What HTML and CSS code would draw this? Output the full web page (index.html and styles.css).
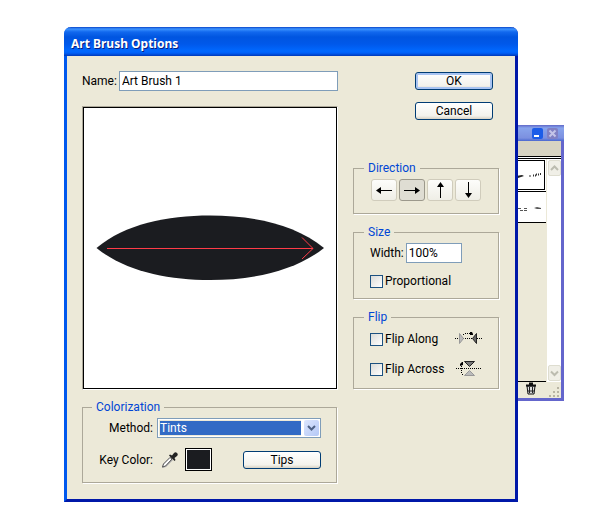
FILE: index.html
```html
<!DOCTYPE html>
<html lang="en">
<head>
<meta charset="utf-8">
<title>Art Brush Options</title>
<link rel="stylesheet" href="styles.css">
</head>
<body>
<main class="desktop">
  <section class="palette" aria-label="Brushes">
    <header class="palette-title">
      <button class="cap cap-min" type="button" aria-label="Minimize"><svg width="11" height="11" viewBox="0 0 11 11"><path d="M2 8h5" stroke="#fff" stroke-width="2"/></svg></button>
      <button class="cap cap-close" type="button" aria-label="Close"><svg width="11" height="11" viewBox="0 0 11 11"><path d="M2.500 2.500l6 6M8.500 2.500l-6 6" stroke="#c4c4e8" stroke-width="2"/></svg></button>
    </header>
    <div class="palette-tabs"></div>
    <div class="palette-body">
      <div class="brushes">
        <div class="brush brush-on"><svg width="28" height="20" viewBox="0 0 28 20"><path d="M0 11l6-1 2 1-6 2H0z" fill="#222"/><path d="M13 11h2" stroke="#333"/><path d="M17 10.500h3M20 9.500h3M24 9h2" stroke="#333" stroke-width="2" stroke-dasharray="1 1"/></svg></div>
        <div class="brush"><svg width="28" height="20" viewBox="0 0 28 20"><path d="M0 10.500h4M2 12.500h7M6 10.500h3" stroke="#555" stroke-dasharray="3 1"/><path d="M16 10l3-1 4 1v1h-4z" fill="#555"/></svg></div>
      </div>
      <div class="scroll">
        <button class="scroll-btn" type="button" aria-label="Scroll up"><svg width="11" height="14" viewBox="0 0 11 14"><path d="M2 9l3.500-3.500L9 9" fill="none" stroke="#bcbcb0" stroke-width="2"/></svg></button>
        <button class="scroll-btn" type="button" aria-label="Scroll down"><svg width="11" height="14" viewBox="0 0 11 14"><path d="M2 5.500L5.500 9 9 5.500" fill="none" stroke="#bcbcb0" stroke-width="2"/></svg></button>
      </div>
    </div>
    <footer class="palette-foot">
      <button class="trash" type="button" aria-label="Delete brush"><svg width="12" height="13" viewBox="0 0 12 13"><path d="M2 4h8l-1 8H3z" fill="#ddd" stroke="#111"/><path d="M4.500 5v6M7.500 5v6M2.500 9h7" stroke="#222"/><path d="M1 3.500h10M4 1.500h4" stroke="#111" stroke-width="2"/></svg></button>
      <svg class="grip" width="11" height="11" viewBox="0 0 11 11" fill="#b8b4a2"><path d="M8 0h2v2H8zM4 4h2v2H4zM8 4h2v2H8zM0 8h2v2H0zM4 8h2v2H4zM8 8h2v2H8z"/></svg>
    </footer>
  </section>

  <form class="dialog" aria-labelledby="dialog-title">
    <h1 class="title" id="dialog-title">Art Brush Options</h1>
    <div class="content">
      <div class="left">
        <div class="row name-row">
          <label for="name">Name:</label>
          <input class="text" id="name" type="text" value="Art Brush 1">
        </div>
        <div class="preview">
          <svg viewBox="0 0 252 280" role="img" aria-label="Brush preview">
            <path d="M12.500 140C41 116 83 107.500 126 107.500S211 116 240 140C211 163 169 172 126 172S41 163 12.500 140z" fill="#1b1c20"/>
            <path d="M23 140.500h206" stroke="#ff3c48"/>
            <path d="M218 129.500l11 11-11 10.500" fill="none" stroke="#ff3c48"/>
          </svg>
        </div>
        <fieldset class="group color">
          <legend>Colorization</legend>
          <div class="row">
            <label class="color-label" for="method">Method:</label>
            <span class="combo">
              <select id="method"><option>Tints</option></select>
              <span class="combo-arrow"><svg width="15" height="16" viewBox="0 0 15 16"><path d="M4 6l3.500 3.500L11 6" fill="none" stroke="#4d6185" stroke-width="2"/></svg></span>
            </span>
          </div>
          <div class="row key-row">
            <span class="color-label">Key Color:</span>
            <button class="dropper" type="button" aria-label="Pick key color"><svg width="17" height="18" viewBox="0 0 17 18"><path d="M1 17l1-4 7-7 3 3-7 7z" fill="#aaa"/><path d="M1.500 16l1-3L9 6.500 11 8l-6.500 7z" fill="#fff" stroke="#555"/><path d="M8 4.500l1-1 2 1L13 2c1-1 2-1 3 0s1 2 0 3l-2.500 2 1 2-1 1z" fill="#222"/></svg></button>
            <button class="swatch" type="button" aria-label="Key color"></button>
            <button class="push" type="button">Tips</button>
          </div>
        </fieldset>
      </div>

      <div class="right">
        <div class="actions">
          <button class="push push-default" type="button">OK</button>
          <button class="push" type="button">Cancel</button>
        </div>
        <fieldset class="group">
          <legend>Direction</legend>
          <div class="dirs">
            <button class="dir" type="button" aria-label="Left"><svg width="24" height="20" viewBox="0 0 24 20"><path d="M5 10.500h15" stroke="#000"/><path d="M4 10.500l5-3.500v7z"/></svg></button>
            <button class="dir" type="button" aria-label="Right" aria-pressed="true"><svg width="24" height="20" viewBox="0 0 24 20"><path d="M4 10.500h15" stroke="#000"/><path d="M20 10.500L15 7v7z"/></svg></button>
            <button class="dir" type="button" aria-label="Up"><svg width="24" height="20" viewBox="0 0 24 20"><path d="M12.500 3v15" stroke="#000"/><path d="M12.500 2L9 7h7z"/></svg></button>
            <button class="dir" type="button" aria-label="Down"><svg width="24" height="20" viewBox="0 0 24 20"><path d="M12.500 2v15" stroke="#000"/><path d="M12.500 18L9 13h7z"/></svg></button>
          </div>
        </fieldset>
        <fieldset class="group">
          <legend>Size</legend>
          <div class="row size-row">
            <label for="width">Width:</label>
            <input class="text width" id="width" type="text" value="100%">
          </div>
          <label class="check"><input type="checkbox">Proportional</label>
        </fieldset>
        <fieldset class="group flip">
          <legend>Flip</legend>
          <div class="row flip-row">
            <label class="check"><input type="checkbox">Flip Along</label>
            <svg width="28" height="16" viewBox="0 0 28 16"><path d="M1 7.500h27" stroke="#000" stroke-dasharray="1 1"/><path d="M5.500 2.500v10l4-5z" fill="#bbb" stroke="#999"/><path d="M22.500 2.500v10l-4-5z" fill="#666" stroke="#222"/><path d="M9 3.500h2M11 2.500h6" fill="none" stroke="#000" stroke-dasharray="1 1"/><path d="M16 1h2l1 2v1h-3z"/></svg>
          </div>
          <div class="row flip-row">
            <label class="check"><input type="checkbox">Flip Across</label>
            <svg width="28" height="16" viewBox="0 0 28 16"><path d="M2 7.500h25" stroke="#000" stroke-dasharray="1 1"/><path d="M10.500 .5h10l-5 5z" fill="#777" stroke="#222"/><path d="M10.500 14.500h10l-5-5z" fill="#bbb" stroke="#999"/><path d="M8.500 14v-2M7.500 12V4" fill="none" stroke="#000" stroke-dasharray="1 1"/><path d="M6 5V3l2-2h1v3z"/></svg>
          </div>
        </fieldset>
      </div>
    </div>
  </form>
</main>
</body>
</html>
```
FILE: styles.css
```css
* { box-sizing: border-box; }

body {
  margin: 0;
  background: #fff;
  color: #000;
  font: 12px/14px Roboto, "Noto Sans", sans-serif;
}

button, input, select { font: inherit; color: inherit; margin: 0; }
button { padding: 0; }
svg { display: block; }

.desktop { position: relative; padding: 27px 82px 23px 64px; }

/* Dialog window */
.dialog {
  position: relative;
  border: solid;
  border-width: 0 3px 3px;
  border-color: #0a3fd8 #0018a8 #0018a8 #0058ee;
  border-radius: 7px 7px 0 0;
  background: #ece9d8;
}

.title {
  margin: 0 -3px;
  padding: 3px 7px 0;
  height: 29px;
  border-radius: 7px 7px 0 0;
  background: linear-gradient(#0a45c8 0, #3c93ff 2px, #1168ee 5px, #0055e0 10px, #0058ea 17px, #0068ff 24px, #0060f8 26px, #0038b8 29px);
  color: #fff;
  font: 700 12px/27px "Noto Sans", "Open Sans", sans-serif;
  text-shadow: 1px 1px 0 #0a1f80;
}

.content {
  display: grid;
  grid-template-columns: minmax(0, 1fr) 147px;
  gap: 15px;
  padding: 15px 15px 16px;
}

.row { display: flex; align-items: center; }

.text {
  height: 20px;
  min-width: 0;
  padding: 0 2px;
  border: 1px solid #7f9db9;
  border-radius: 0;
  background: #fff;
}

.name-row { justify-content: flex-end; gap: 2px; }
.name-row .text { flex: 0 1 220px; }

.preview {
  margin: 15px 0 10px;
  border: 1px solid #aca899;
  border-right-color: #fff;
  border-bottom-color: #fff;
}
.preview svg { width: 100%; border: 1px solid #000; background: #fff; }

/* Titled groups */
.group {
  min-width: 0;
  margin: 0 1px 0 0;
  padding: 0 16px;
  border: 1px solid #aca899;
  box-shadow: 1px 1px 0 #fff;
}
.group legend { margin-left: -6px; padding: 0 4px; color: #0046d5; }

.color { padding: 4px 15px 11px 12px; }
.color legend { margin-left: -3px; }
.color-label { width: 58px; text-align: right; }
.key-row { margin-top: 10px; }
.key-row .push { margin-left: auto; }

.combo { position: relative; flex: 1; margin-left: 4px; }
.combo select {
  display: block;
  width: 100%;
  height: 20px;
  padding: 0 20px 0 2px;
  appearance: none;
  border: 1px solid #7f9db9;
  border-radius: 0;
  background: #316ac5;
  box-shadow: inset 0 0 0 1px #fff, inset 0 0 0 2px #ece9d8;
  color: #fff;
}
.combo-arrow {
  position: absolute;
  top: 1px;
  right: 1px;
  padding: 1px 1px 1px 3px;
  background: #fff;
  pointer-events: none;
}
.combo-arrow svg { border-radius: 2px; background: linear-gradient(135deg, #dce6fe, #b4c8f6); }

.dropper { margin-left: 8px; border: 0; background: none; }
.swatch {
  width: 27px;
  height: 23px;
  margin-left: 7px;
  border: 1px solid #000;
  background: #1b1c20;
  box-shadow: inset 0 0 0 1px #fff;
}

/* Buttons */
.push {
  width: 78px;
  height: 18px;
  border: 1px solid #003c74;
  border-radius: 3px;
  background: linear-gradient(#fff, #f3f2ec 80%, #d8d2c4);
  line-height: 16px;
}
.push-default { box-shadow: inset 0 0 0 2px #a9c4f2; }

.actions {
  display: flex;
  flex-direction: column;
  align-items: flex-end;
  gap: 12px;
  padding: 1px 7px 0 0;
  margin-bottom: 41px;
}
.right .group { margin-bottom: 11px; }

.dirs { display: flex; gap: 2px; padding: 4px 0 12px 1px; }
.dir {
  width: 26px;
  height: 22px;
  border: 1px solid #d0ccbc;
  border-radius: 3px;
  background: linear-gradient(#fdfdfb, #efeee6);
}
.dir[aria-pressed] { border-color: #9c998c; background: #dfddd3; }

.size-row { gap: 2px; padding: 4px 0 11px; }
.width { width: 56px; }
.right .group:nth-of-type(2) { padding-bottom: 10px; }

.check { display: flex; align-items: center; gap: 2px; white-space: nowrap; }
.check input {
  appearance: none;
  width: 13px;
  height: 13px;
  border: 1px solid #1c5180;
  background: linear-gradient(135deg, #dcdcd7, #fff);
}

.right .flip { margin-bottom: 0; padding-bottom: 4px; }
.flip-row { justify-content: space-between; height: 30px; }

/* Brushes palette behind the dialog */
.palette {
  position: absolute;
  top: 125px;
  right: 36px;
  display: flex;
  flex-direction: column;
  width: 76px;
  height: 276px;
  border: solid #6466cc;
  border-width: 0 3px 3px;
  background: #ece9d8;
}
.palette-title {
  display: flex;
  justify-content: flex-end;
  gap: 4px;
  height: 16px;
  margin-right: -3px;
  padding: 3px 6px;
  background: linear-gradient(#6068c8, #88a4ec 3px, #7c90e0 13px, #4a68d0);
}
.cap { width: 11px; height: 11px; border: 0; border-radius: 2px; }
.cap-min { background: #1c5ce8; }
.cap-close { background: #8080c4; }
.palette-tabs { height: 18px; border-bottom: 1px solid #000; background: linear-gradient(#d8d4c2 15px, #000 15px, #000 16px, #fff 16px); }
.palette-body { display: flex; flex: 1; }
.brushes { flex: 1; border-bottom: 1px solid #000; background: linear-gradient(#fff 63px, transparent 63px); }
.brush { display: flex; justify-content: flex-end; height: 32px; padding-top: 6px; border: solid #000; border-width: 1px 0; }
.brush-on { height: 30px; margin: 1px 1px 1px 0; padding-top: 4px; border-width: 1px; }
.scroll {
  display: flex;
  flex-direction: column;
  justify-content: space-between;
  margin-left: 1px;
  padding: 1px 0 1px 1px;
  background: #fff;
}
.scroll-btn { border: 1px solid #deddd0; border-radius: 2px; background: #f0efe7; }
.palette-foot { display: flex; justify-content: flex-end; align-items: flex-end; gap: 12px; height: 16px; padding-right: 1px; }
.trash { align-self: flex-start; border: 0; background: none; }
```
